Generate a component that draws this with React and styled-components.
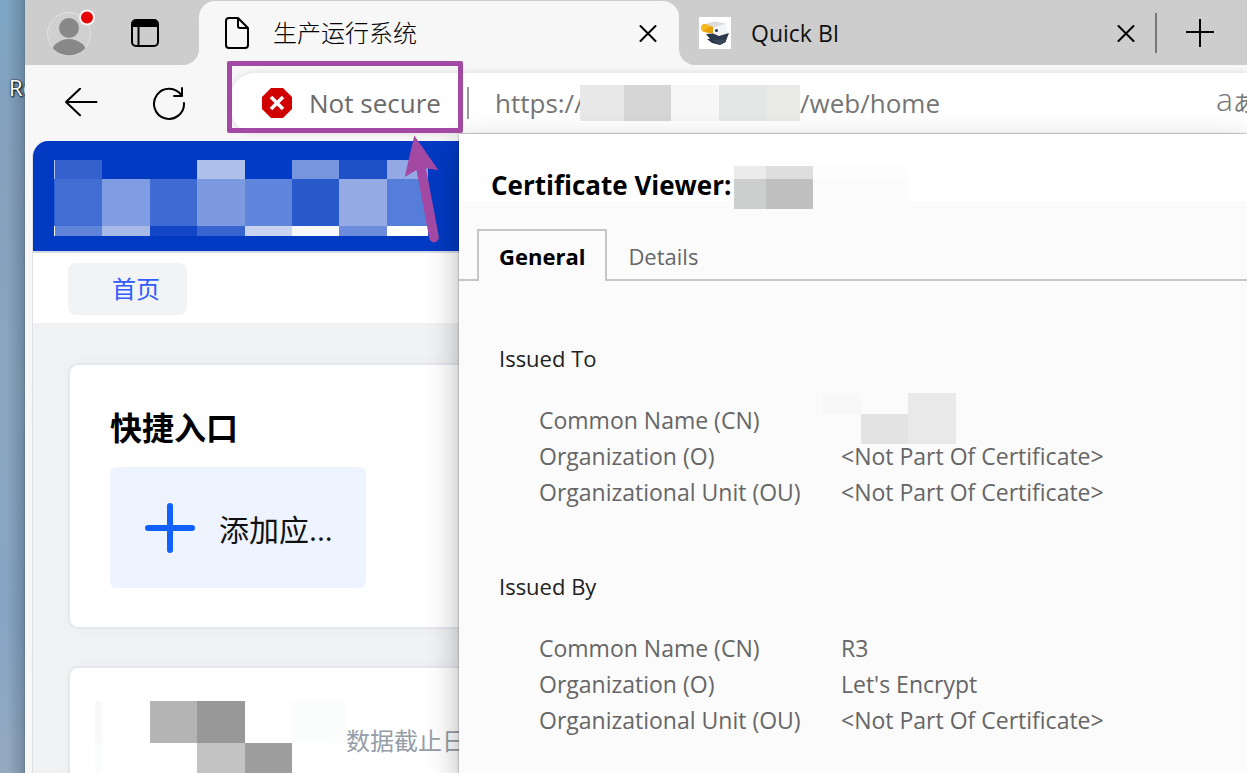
import React, { useState } from "react";
import styled, { createGlobalStyle } from "styled-components";

const GlobalStyle = createGlobalStyle`
    * {
        box-sizing: border-box;
    }
    body {
        margin: 0;
        font-family: "Open Sans", "Noto Sans CJK SC", sans-serif;
        overflow: hidden;
    }
    button, input {
        font: inherit;
        color: inherit;
        border: 0;
        padding: 0;
        background: none;
    }
`;

const Screen = styled.div`
    display: flex;
    height: 100vh;
    overflow: hidden;
`;

const Desktop = styled.div`
    flex: 0 0 25px;
    padding: 72px 0 0 9px;
    overflow: hidden;
    font-size: 22px;
    line-height: 30px;
    color: #fff;
    text-shadow: 1px 1px 2px #000, 0 0 2px #000;
    background:
        linear-gradient(90deg, transparent 30%, rgba(60, 80, 100, 0.35)),
        linear-gradient(#7da6c4, #86a0bd 20%, #8aa6bf 50%, #86a4c4 80%, #95aac0);
`;

const Window = styled.div`
    flex: 1;
    min-width: 0;
    display: flex;
    flex-direction: column;
    background: #f7f7f7;
    box-shadow: 0 0 2px #556677;
`;

/* ---- tab strip ---- */

const TabStrip = styled.div`
    display: flex;
    height: 65px;
`;

const StripStart = styled.div`
    display: flex;
    align-items: center;
    gap: 34px;
    width: 174px;
    padding-left: 20px;
    background: #cdcdcd;
    border-bottom-right-radius: 16px;
`;

const TabBack = styled.div`
    width: 480px;
    padding-top: 1px;
    background: linear-gradient(#cdcdcd 50%, #f7f7f7 50%);
`;

const Tab = styled.div`
    display: flex;
    align-items: center;
    height: 64px;
    padding: 0 18px 0 25px;
    gap: 24px;
    background: #f7f7f7;
    border-radius: 16px 16px 0 0;
`;

const StripEnd = styled.div`
    flex: 1;
    display: flex;
    align-items: center;
    padding-left: 20px;
    gap: 16px;
    background: #cdcdcd;
    border-bottom-left-radius: 16px;
`;

const TabTitle = styled.span`
    flex: 1;
    font-size: 24px;
    font-weight: 300;
    line-height: 32px;
    color: #000;
    white-space: nowrap;
`;

const QuietTabTitle = styled(TabTitle)`
    flex: 0 0 350px;
    padding-left: 4px;
    font-size: 23px;
    font-weight: 400;
    color: #111;
`;

const IconButton = styled.button`
    display: flex;
    flex: none;
    align-items: center;
    justify-content: center;
    width: ${props => props.$w || 26}px;
    height: ${props => props.$h || 26}px;
`;

const Separator = styled.div`
    flex: none;
    width: 2px;
    height: ${props => props.$h}px;
    background: ${props => props.$color};
`;

/* ---- toolbar ---- */

const Toolbar = styled.div`
    display: flex;
    height: 76px;
    padding-top: 8px;
`;

const NavButtons = styled.div`
    display: flex;
    align-items: center;
    gap: 52px;
    width: 206px;
    height: 60px;
    padding-left: 38px;
`;

const AddressBar = styled.div`
    flex: 1;
    min-width: 0;
    display: flex;
    align-items: center;
    height: 60px;
    background: #fff;
    border-radius: 24px 0 0 24px;
    box-shadow: 0 0 6px rgba(0, 0, 0, 0.12);
    font-size: 26px;
    color: #757575;
`;

const Security = styled.button`
    position: relative;
    display: flex;
    align-items: center;
    gap: 17px;
    width: 236px;
    height: 60px;
    padding-left: 31px;
    color: #6b6b6b;
    white-space: nowrap;
`;

const Highlight = styled.span`
    position: absolute;
    top: -12px;
    left: -4px;
    width: 236px;
    height: 72px;
    z-index: 3;
    border: 5px solid #a349a4;
    border-radius: 2px;
`;

const AddressInput = styled.input`
    flex: ${props => props.$width ? `0 0 ${props.$width}px` : "1"};
    min-width: 0;
    height: 40px;
    outline: none;
`;

const UrlScheme = styled(AddressInput)`
    margin-left: 26px;
`;

const Translate = styled.button`
    display: flex;
    align-items: baseline;
    flex: 0 0 31px;
    height: 40px;
    overflow: hidden;
    font-size: 32px;
    font-weight: 300;
    line-height: 32px;
    white-space: nowrap;
`;

const Kana = styled.span`
    font-family: "Noto Sans CJK JP", sans-serif;
    font-size: 22px;
    font-weight: 400;
`;

/* ---- mosaic blocks ---- */

const MosaicGrid = styled.div`
    flex: none;
    display: grid;
    grid-template-columns: ${props => props.$cols};
    grid-template-rows: ${props => props.$rows};
`;

const MosaicCell = styled.div`
    background: ${props => props.$color};
`;

const Mosaic = ({ cols, rows, colors, ...rest }) => (
  <MosaicGrid $cols={cols} $rows={rows} {...rest}>
    {colors.map((c, i) => <MosaicCell key={i} $color={c} />)}
  </MosaicGrid>
);

/* ---- site ---- */

const Content = styled.div`
    position: relative;
    flex: 1;
    min-height: 0;
    padding-left: 7px;
`;

const Site = styled.main`
    height: 100%;
    display: flex;
    flex-direction: column;
    overflow: hidden;
    background: #f1f2f4;
    border-left: 1px solid #dfe1e4;
    border-top-left-radius: 16px;
`;

const SiteHeader = styled.header`
    flex: none;
    height: 112px;
    padding: 19px 21px;
    background: #003ac3;
    border-bottom: 2px solid #d7dae6;
`;

const SiteNav = styled.nav`
    flex: none;
    height: 70px;
    padding: 10px 35px;
    background: #fff;
`;

const NavLink = styled.a`
    display: block;
    width: 119px;
    height: 52px;
    padding-left: 44px;
    border-radius: 8px;
    background: #f2f3f4;
    color: #2f5dfc;
    font-size: 24px;
    line-height: 52px;
    text-decoration: none;
`;

const Cards = styled.div`
    flex: 1;
    display: flex;
    flex-direction: column;
    gap: 37px;
    padding: 40px 0 0 35px;
`;

const Card = styled.section`
    flex: none;
    height: ${props => props.$h}px;
    padding: ${props => props.$pad};
    background: #fff;
    border: 2px solid #e4e7ee;
    border-radius: 10px;
    box-shadow: 0 0 16px rgba(0, 0, 0, 0.03);
`;

const CardTitle = styled.h2`
    margin: 0 0 16px;
    font-size: 32px;
    line-height: 46px;
    font-weight: 700;
    color: #000;
`;

const AddTile = styled.button`
    display: flex;
    align-items: center;
    gap: 23px;
    width: 256px;
    height: 121px;
    padding-left: 34px;
    border-radius: 6px;
    background: #edf3ff;
    font-size: 30px;
    color: #111;
`;

const DataRow = styled.div`
    display: flex;
    font-size: 24px;
    line-height: 80px;
    color: #959da7;
    white-space: nowrap;
`;

/* ---- certificate dialog ---- */

const Dialog = styled.section`
    position: absolute;
    top: -7px;
    left: 434px;
    right: 0;
    bottom: 0;
    z-index: 1;
    background: #fbfbfb;
    box-shadow: 0 0 2px rgba(0, 0, 0, 0.4), 0 12px 30px rgba(0, 0, 0, 0.3);
    color: #666;
    font-size: 23px;
`;

const DialogHeader = styled.div`
    display: flex;
    height: 67px;
    padding: 32px 0 0 32px;
    background: #fff;
`;

const DialogTitle = styled.h1`
    flex: 0 0 243px;
    margin: 0;
    font-size: 26px;
    line-height: 38px;
    font-weight: 700;
    color: #000;
    white-space: nowrap;
`;

const Tabs = styled.div`
    display: flex;
    height: 80px;
    padding: 28px 0 0 18px;
    border-bottom: 2px solid #c6c6c6;
`;

const DialogTab = styled.button`
    height: 52px;
    padding: 0 ${props => props.$active ? 20 : 21}px;
    font-size: 22px;
    font-weight: ${props => props.$active ? 700 : 400};
    color: ${props => props.$active ? "#000" : "#666"};
    background: #fbfbfb;
    border: ${props => props.$active ? "2px solid #c6c6c6" : "2px solid transparent"};
    border-width: ${props => props.$active ? "2px 2px 0" : "2px 0 0"};
    box-shadow: ${props => props.$active ? "none" : "inset 0 -2px #c6c6c6"};
`;

const Panel = styled.div`
    display: flex;
    flex-direction: column;
    gap: 58px;
    padding: 59px 0 0 40px;
`;

const GroupTitle = styled.h3`
    margin: 0 0 26px;
    font-size: 22px;
    line-height: 36px;
    font-weight: 400;
    color: #222;
`;

const Fields = styled.dl`
    display: grid;
    grid-template-columns: 302px 1fr;
    margin: 0 0 0 40px;
    line-height: 36px;
    white-space: nowrap;
`;

const Label = styled.dt``;

const Value = styled.dd`
    position: relative;
    height: 36px;
    margin: 0;
`;

const NameMosaic = styled(Mosaic)`
    position: absolute;
    top: -9px;
    left: -18px;
`;

const Arrow = styled.svg`
    position: absolute;
    top: -8px;
    left: 376px;
    z-index: 2;
`;

const CloseIcon = () => (
  <svg width="18" height="18" viewBox="0 0 18 18" stroke="#000" strokeWidth="2" strokeLinecap="round">
    <path d="M1.500 2L16.500 17M16.500 2L1.500 17" />
  </svg>
);

const ProfileIcon = () => (
  <svg width="52" height="52" viewBox="0 0 52 52">
    <defs>
      <clipPath id="avatar"><circle cx="24" cy="27" r="21.5" /></clipPath>
    </defs>
    <circle cx="24" cy="27" r="21.5" fill="#d0d0d0" stroke="#e2e2e2" />
    <circle cx="24" cy="21" r="10" fill="#888" />
    <ellipse cx="24" cy="47" rx="18" ry="15" fill="#888" clipPath="url(#avatar)" />
    <circle cx="42" cy="10.500" r="7" fill="#e60000" stroke="#f5f5f5" strokeWidth="2" />
  </svg>
);

const WorkspaceIcon = () => (
  <svg width="28" height="28" viewBox="0 0 28 28">
    <rect x="1" y="1" width="26" height="26" rx="4" fill="none" stroke="#000" strokeWidth="2" />
    <path d="M1 8V5a4 4 0 0 1 4-4h18a4 4 0 0 1 4 4v3z" />
    <path d="M7.500 7V27" stroke="#000" strokeWidth="2" />
  </svg>
);

const PageIcon = () => (
  <svg width="25" height="34" viewBox="0 0 25 34" fill="none" stroke="#000" strokeWidth="2" strokeLinejoin="round">
    <path d="M5 2h9L24 12V29a3 3 0 0 1-3 3H5a3 3 0 0 1-3-3V5a3 3 0 0 1 3-3zM14 2v8a2 2 0 0 0 2 2h8" />
  </svg>
);

const EagleIcon = () => (
  <svg width="32" height="32" viewBox="0 0 32 32">
    <rect width="32" height="32" fill="#fff" />
    <path d="M13 9.500L27 6.500L28 12L29 16L20 18.500L14 17z" fill="#f4f5f7" />
    <path d="M4 7.500L15 4.500L27 6.500L14 10.500Q8 7 4 7.500z" fill="#dadbdb" />
    <path d="M2 10Q3 7 6 7L14 10V16.500L7 15.500Q5.500 14.500 4.500 15Q2 13 2 10z" fill="#e8a20c" />
    <path d="M2 10Q3 7 6 7L14 10Q7 9.500 4.500 15Q2 13 2 10z" fill="#f7bb22" />
    <path d="M7 17L14 16.500L20 19L30 16L26.500 25L21 28L13 26L8 22L11 22z" fill="#2b394a" />
    <path d="M14 23L27.500 22L26.500 25L21 28z" fill="#38475a" />
    <circle cx="17.500" cy="13.500" r="1.500" fill="#263447" />
  </svg>
);

const BackIcon = () => (
  <svg width="34" height="30" viewBox="0 0 34 30" fill="none" stroke="#000" strokeWidth="2" strokeLinecap="round" strokeLinejoin="round">
    <path d="M32.500 14H2M16 0.800L2 14L16 27.200" />
  </svg>
);

const RefreshIcon = () => (
  <svg width="34" height="34" viewBox="0 0 34 34" fill="none" stroke="#000" strokeWidth="2" strokeLinecap="round" strokeLinejoin="round">
    <path d="M32 17A15 15 0 1 1 29.500 9.500M30 2V10H22" />
  </svg>
);

const DangerIcon = () => (
  <svg width="30" height="30" viewBox="0 0 30 30">
    <path d="M9 0H21L30 9V21L21 30H9L0 21V9z" fill="#d00000" />
    <path d="M9 9L21 21M21 9L9 21" stroke="#fff" strokeWidth="3.500" />
  </svg>
);

const headerColors = [
  "#aebfe9", "#3461cd", "#003ac3", "#003ac3", "#aebfe9", "#003cc5", "#7896df", "#1e50c8", "#93a9e5",
  "#2c5ccd", "#426dd3", "#809ce2", "#3e6ad2", "#7d9ae1", "#6085dc", "#285acb", "#94abe6", "#567dd9",
  "#ffffff", "#6084da", "#a6b9e7", "#1246c7", "#3864d0", "#c8d3f1", "#f5f7fc", "#6c8bdd", "#ffffff",
];

const groups = [
  {
    title: "Issued To",
    fields: [
      ["Common Name (CN)", null],
      ["Organization (O)", "<Not Part Of Certificate>"],
      ["Organizational Unit (OU)", "<Not Part Of Certificate>"],
    ],
  },
  {
    title: "Issued By",
    fields: [
      ["Common Name (CN)", "R3"],
      ["Organization (O)", "Let's Encrypt"],
      ["Organizational Unit (OU)", "<Not Part Of Certificate>"],
    ],
  },
];

const Certificate = () => {
  const [tab, setTab] = useState("General");

  return (
    <Dialog role="dialog" aria-label="Certificate Viewer">
      <DialogHeader>
        <DialogTitle>Certificate Viewer:</DialogTitle>
        <Mosaic
          cols="32px 47px 95px"
          rows="13px 30px"
          colors={["#ebebeb", "#dedede", "#fdfdfd", "#cccfce", "#bfbfbf", "#fbfbfb"]}
        />
      </DialogHeader>
      <Tabs role="tablist">
        {["General", "Details"].map((name) => (
          <DialogTab key={name} role="tab" aria-selected={tab === name} $active={tab === name} onClick={() => setTab(name)}>
            {name}
          </DialogTab>
        ))}
      </Tabs>
      <Panel role="tabpanel">
        {groups.map((group) => (
          <div key={group.title}>
            <GroupTitle>{group.title}</GroupTitle>
            <Fields>
              {group.fields.map(([label, value]) => (
                <React.Fragment key={label}>
                  <Label>{label}</Label>
                  <Value>
                    {value || (
                      <NameMosaic
                        cols="38px 47px 48px"
                        rows="21px 30px"
                        colors={["#f8f8f8", "#fbfbfb", "#e9e9e9", "#fbfbfb", "#e3e3e3", "#e9e9e9"]}
                      />
                    )}
                  </Value>
                </React.Fragment>
              ))}
            </Fields>
          </div>
        ))}
      </Panel>
    </Dialog>
  );
};

const App = () => (
  <Screen>
    <GlobalStyle />
    <Desktop>Re</Desktop>
    <Window>
      <TabStrip>
        <StripStart>
          <IconButton $w={52} $h={52} aria-label="Profile"><ProfileIcon /></IconButton>
          <IconButton $w={28} $h={28} aria-label="Workspaces"><WorkspaceIcon /></IconButton>
        </StripStart>
        <TabBack>
          <Tab>
            <PageIcon />
            <TabTitle>生产运行系统</TabTitle>
            <IconButton aria-label="Close tab"><CloseIcon /></IconButton>
          </Tab>
        </TabBack>
        <StripEnd>
          <EagleIcon />
          <QuietTabTitle>Quick BI</QuietTabTitle>
          <IconButton aria-label="Close tab"><CloseIcon /></IconButton>
          <Separator $h={40} $color="#777" />
          <IconButton $w={54} $h={30} aria-label="New tab">
            <svg width="28" height="28" viewBox="0 0 28 28" stroke="#000" strokeWidth="2">
              <path d="M14 0V28M0 13H28" />
            </svg>
          </IconButton>
        </StripEnd>
      </TabStrip>
      <Toolbar>
        <NavButtons>
          <IconButton $w={36} $h={34} aria-label="Back"><BackIcon /></IconButton>
          <IconButton $w={36} $h={34} aria-label="Refresh"><RefreshIcon /></IconButton>
        </NavButtons>
        <AddressBar>
          <Security>
            <DangerIcon />
            Not secure
            <Highlight />
          </Security>
          <Separator $h={32} $color="#999" />
          <UrlScheme $width={85} aria-label="Address scheme" defaultValue="https://" />
          <Mosaic
            cols="44px 47px 48px 47px 34px"
            rows="36px"
            colors={["#e8e8e8", "#d6d6d6", "#f7f7f7", "#e4e7e6", "#e9e9e8"]}
          />
          <AddressInput aria-label="Address path" defaultValue="/web/home" />
          <Translate aria-label="Translate">a<Kana>あ</Kana></Translate>
        </AddressBar>
      </Toolbar>
      <Content>
        <Site>
          <SiteHeader>
            <Mosaic
              cols="1px 47px 48px 47px 48px 47px 47px 48px 41px"
              rows="19px 47px 10px"
              colors={headerColors}
            />
          </SiteHeader>
          <SiteNav>
            <NavLink href="#home">首页</NavLink>
          </SiteNav>
          <Cards>
            <Card $h={266} $pad="40px 40px">
              <CardTitle>快捷入口</CardTitle>
              <AddTile>
                <svg width="52" height="52" viewBox="0 0 52 52" stroke="#1160ff" strokeWidth="6" strokeLinecap="round">
                  <path d="M26 4V48M4 26H48" />
                </svg>
                添加应...
              </AddTile>
            </Card>
            <Card $h={266} $pad="33px 25px">
              <DataRow>
                <Mosaic
                  cols="7px 48px 47px 48px 47px 54px"
                  rows="42px 48px"
                  colors={[
                    "#f9f9f9", "#fff", "#b4b4b4", "#989898", "#fff", "#fbfcfc",
                    "#fbfdfc", "#fff", "#fff", "#c3c3c3", "#9e9e9e", "#fff",
                  ]}
                />
                数据截止日期
              </DataRow>
            </Card>
          </Cards>
        </Site>
        <Certificate />
        <Arrow width="44" height="112" viewBox="0 0 44 112" fill="#a349a4">
          <path d="M13.300 2.500L37.300 37L25 35.500L37.800 103.500A4.800 4.800 0 0 1 28.300 105.300L15.500 37L3.700 44z" />
        </Arrow>
      </Content>
    </Window>
  </Screen>
);

export default App;
